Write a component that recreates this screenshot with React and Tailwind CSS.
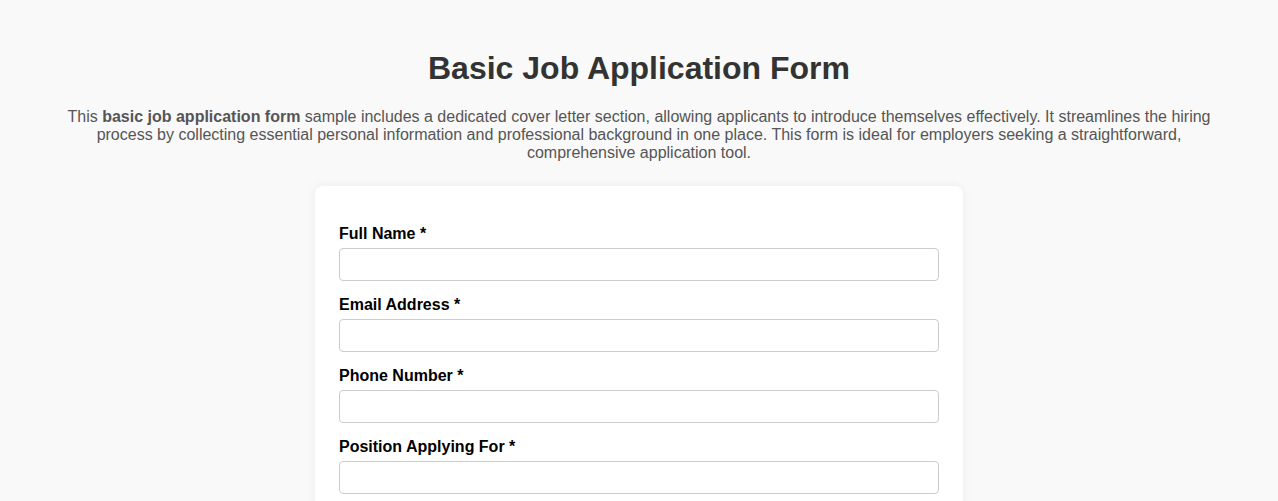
export default function App() {
  const fields = ["Full Name", "Email Address", "Phone Number", "Position Applying For"];
  return (
    <div className="min-h-[501px] bg-[#f9f9f9] font-['Liberation_Sans',Arial,sans-serif] px-[20px] pt-[50px] pb-10">
      <h1 className="text-center text-[32px] leading-[37px] font-bold text-[#333333]">Basic Job Application Form</h1>
      <p className="mx-auto mt-[21px] max-w-[1152px] text-center text-[16px] leading-[18px] text-[#555555]">
        This <strong className="font-bold">basic job application form</strong> sample includes a dedicated cover letter section, allowing applicants to introduce themselves effectively. It streamlines the hiring process by collecting essential personal information and professional background in one place. This form is ideal for employers seeking a straightforward, comprehensive application tool.
      </p>
      <div className="mx-auto mt-[24px] w-[648px] rounded-[8px] bg-white px-[24px] pt-[39px] pb-[24px] shadow-[0_0_10px_rgba(0,0,0,0.06)]">
        {fields.map((f) => (
          <div key={f} className="mb-[15px]">
            <label className="block text-[16px] leading-[18px] font-bold text-black mb-[5px]">{f} *</label>
            <input type="text" className="block w-full h-[33px] rounded-[4px] border border-[#cccccc] bg-white px-2 text-[16px]" />
          </div>
        ))}
      </div>
    </div>
  );
}
